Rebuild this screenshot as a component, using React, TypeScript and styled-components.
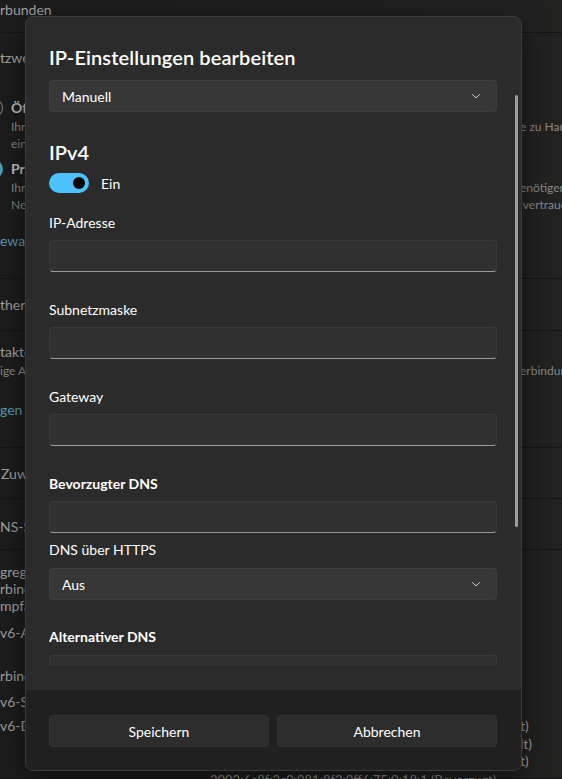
import styled, { createGlobalStyle } from "styled-components";

const GlobalStyle = createGlobalStyle`
  html, body {
    margin: 0;
    padding: 0;
    background: #1c1c1c;
  }
  body {
    font-family: "Lato", "Noto Sans", sans-serif;
    -webkit-font-smoothing: antialiased;
  }
`;

type BgLine = {
  left?: string;
  right?: string;
  kind?: "head" | "title" | "desc" | "link" | "text";
  indent?: number;
  mt?: number;
  radio?: "on" | "off";
};

const sections: { height: number; pt: number; lines: BgLine[] }[] = [
  { height: 33, pt: 0, lines: [{ left: "rbunden", kind: "text" }] },
  {
    height: 246,
    pt: 15,
    lines: [
      { left: "tzwerkprofiltyp", kind: "head" },
      { left: "Öffentliches Netzwerk (empfohlen)", kind: "title", indent: 11, mt: 30, radio: "off" },
      { left: "Ihr Gerät ist im Netzwerk nicht auffindbar.", right: "e zu Hause", kind: "desc", indent: 11 },
      { left: "ein Netzwerk verwenden", kind: "desc", indent: 11 },
      { left: "Privates Netzwerk", kind: "title", indent: 11, mt: 7, radio: "on" },
      { left: "Ihr Gerät ist im Netzwerk auffindbar.", right: "enötigen", kind: "desc", indent: 11 },
      { left: "Netzwerk vertrauen", right: " vertrauen", kind: "desc", indent: 11 },
      { left: "ewall- und Sicherheitseinstellungen konfigurieren", kind: "link", mt: 18 },
    ],
  },
  { height: 52, pt: 16, lines: [{ left: "thernet", kind: "text" }] },
  {
    height: 117,
    pt: 11,
    lines: [
      { left: "taktete Verbindung", kind: "text" },
      { left: "ige Apps funktionieren möglicherweise anders", right: "erbindung", kind: "desc" },
      { left: "gen Sie ein Datenlimit fest", kind: "link", mt: 21 },
    ],
  },
  { height: 51, pt: 16, lines: [{ left: "Zuweisung", kind: "text", indent: 1 }] },
  { height: 51, pt: 18, lines: [{ left: "NS-Serverzuweisung", kind: "text", indent: -1 }] },
  {
    height: 229,
    pt: 12,
    lines: [
      { left: "gregierte", kind: "text" },
      { left: "rbindungsgeschwindigkeit", kind: "text", mt: -3 },
      { left: "mpfangen/Übertragen)", kind: "text", mt: -3 },
      { left: "v6-Adresse", kind: "text", indent: -6, mt: 7 },
      { left: "rbindungslokale", kind: "text", mt: 23 },
      { left: "v6-Standardgateway", kind: "text", indent: -6, mt: 6 },
      { left: "v6-DNS-Server", right: "t)", kind: "text", indent: -6, mt: 4 },
      { right: "lt)", kind: "text", mt: -2 },
      { right: "t)", kind: "text", mt: -3 },
    ],
  },
];

export default function App() {
  return (
    <>
      <GlobalStyle />
      <Page>
        {sections.map((s, i) => (
          <Section key={i} $height={s.height} $pt={s.pt}>
            {s.lines.map((l, j) => (
              <Row key={j} $mt={l.mt ?? 0}>
                <LeftText $kind={l.kind ?? "text"} $indent={l.indent ?? 0}>
                  {l.radio && <Radio $on={l.radio === "on"} />}
                  {l.left}
                </LeftText>
                <RightText $kind={l.kind ?? "text"}>{l.right}</RightText>
              </Row>
            ))}
          </Section>
        ))}
        <TailValue>2002:6c8f:2c0:981:8f2:9ff6:75:0:18:1 (Bevorzugt)</TailValue>

        <Dialog>
          <Body>
            <Title>IP-Einstellungen bearbeiten</Title>
            <Scroll>
              <Select $mt={9}>
                Manuell
                <Chevron />
              </Select>
              <Heading>IPv4</Heading>
              <ToggleRow>
                <Toggle>
                  <Knob />
                </Toggle>
                Ein
              </ToggleRow>
              <Label $mt={20}>IP-Adresse</Label>
              <Input />
              <Label>Subnetzmaske</Label>
              <Input />
              <Label>Gateway</Label>
              <Input />
              <Label $bold>Bevorzugter DNS</Label>
              <Input />
              <Label $mt={7}>DNS über HTTPS</Label>
              <Select $mt={8}>
                Aus
                <Chevron />
              </Select>
              <Label $bold $mt={27}>
                Alternativer DNS
              </Label>
              <Input $mt={8} />
              <Label>Alternative DNS-Verschlüsselung</Label>
            </Scroll>
            <Thumb />
          </Body>
          <Footer>
            <Button>Speichern</Button>
            <Button>Abbrechen</Button>
          </Footer>
        </Dialog>
      </Page>
    </>
  );
}

const Chevron = () => (
  <svg width="12" height="12" viewBox="0 0 12 12" fill="none">
    <path d="M2.5 4.5 L6 8 L9.5 4.5" stroke="#cfcfcf" strokeWidth="1" strokeLinecap="round" strokeLinejoin="round" />
  </svg>
);

const Page = styled.div`
  position: relative;
  width: 562px;
  height: 779px;
  overflow: hidden;
  background: linear-gradient(90deg, #1b1b1b 0%, #1e1e1e 70%, #20211f 100%);
`;

const Section = styled.div<{ $height: number; $pt: number }>`
  box-sizing: border-box;
  height: ${({ $height }) => $height}px;
  padding-top: ${({ $pt }) => $pt}px;
  border-bottom: 1px solid #151515;
  background: rgba(255, 255, 255, 0.012);

  &:last-of-type {
    border-bottom: none;
    background: transparent;
  }
`;

const Row = styled.div<{ $mt: number }>`
  display: grid;
  grid-template-columns: 1fr 42px;
  margin-top: ${({ $mt }) => $mt}px;
`;

const kindColor = {
  head: "#a9a9a9",
  title: "#c4c4c4",
  desc: "#8a8a8a",
  link: "#5c9db2",
  text: "#a3a3a3",
};

const LeftText = styled.div<{ $kind: keyof typeof kindColor; $indent: number }>`
  position: relative;
  padding-left: ${({ $indent }) => $indent}px;
  white-space: nowrap;
  overflow: hidden;
  font-size: ${({ $kind }) => ($kind === "desc" ? 12 : 14)}px;
  line-height: ${({ $kind }) => ($kind === "desc" ? 17 : 20)}px;
  font-weight: ${({ $kind }) => ($kind === "title" ? 700 : 400)};
  color: ${({ $kind }) => kindColor[$kind]};
`;

const RightText = styled(LeftText).attrs({ $indent: 0 })`
  white-space: pre;
`;

const Radio = styled.span<{ $on: boolean }>`
  position: absolute;
  left: -17px;
  top: 0;
  width: 20px;
  height: 20px;
  box-sizing: border-box;
  border-radius: 50%;
  border: ${({ $on }) => ($on ? "5px solid #4e9fc0" : "1px solid #8a8a8a")};
  background: ${({ $on }) => ($on ? "#111" : "transparent")};
`;

const TailValue = styled.div`
  position: absolute;
  left: 210px;
  top: 771px;
  font-size: 13px;
  line-height: 18px;
  color: #8a8a8a;
  white-space: nowrap;
`;

const Dialog = styled.div`
  position: absolute;
  left: 25px;
  top: 16px;
  width: 497px;
  height: 755px;
  box-sizing: border-box;
  display: flex;
  flex-direction: column;
  border: 1px solid #3b3b3b;
  border-radius: 8px;
  overflow: hidden;
  background: #2b2b2b;
  box-shadow: 0 8px 32px rgba(0, 0, 0, 0.55);
  color: #ffffff;
`;

const Body = styled.div`
  position: relative;
  flex: 1;
  display: flex;
  flex-direction: column;
  min-height: 0;
  padding: 0 24px 25px 23px;
`;

const Title = styled.div`
  margin-top: 26px;
  font-size: 20px;
  line-height: 28px;
  font-weight: 600;
  letter-spacing: 0.1px;
`;

const Scroll = styled.div`
  flex: 1;
  min-height: 0;
  overflow: hidden;
  display: flex;
  flex-direction: column;
`;

const Select = styled.div<{ $mt: number }>`
  flex-shrink: 0;
  box-sizing: border-box;
  height: 32px;
  margin-top: ${({ $mt }) => $mt}px;
  padding: 0 14px 0 12px;
  display: flex;
  align-items: center;
  justify-content: space-between;
  background: #373737;
  border: 1px solid #3d3d3d;
  border-top-color: #414141;
  border-radius: 4px;
  font-size: 14px;
`;

const Heading = styled.div`
  margin-top: 26px;
  font-size: 20px;
  line-height: 28px;
  font-weight: 600;
`;

const ToggleRow = styled.div`
  margin-top: 7px;
  display: flex;
  align-items: center;
  gap: 12px;
  height: 20px;
  font-size: 14px;
`;

const Toggle = styled.div`
  position: relative;
  width: 40px;
  height: 20px;
  border-radius: 10px;
  background: #4cc2ff;
`;

const Knob = styled.span`
  position: absolute;
  right: 4px;
  top: 4px;
  width: 12px;
  height: 12px;
  border-radius: 50%;
  background: #000;
`;

const Label = styled.div<{ $mt?: number; $bold?: boolean }>`
  flex-shrink: 0;
  margin-top: ${({ $mt }) => $mt ?? 28}px;
  font-size: 14px;
  line-height: 20px;
  font-weight: ${({ $bold }) => ($bold ? 700 : 400)};
`;

const Input = styled.div<{ $mt?: number }>`
  flex-shrink: 0;
  box-sizing: border-box;
  height: 32px;
  margin-top: ${({ $mt }) => $mt ?? 7}px;
  background: #313131;
  border: 1px solid #393939;
  border-bottom: 1px solid #9a9a9a;
  border-radius: 4px;
`;

const Thumb = styled.span`
  position: absolute;
  right: 3px;
  top: 78px;
  width: 3px;
  height: 432px;
  border-radius: 2px;
  background: #9c9c9c;
`;

const Footer = styled.div`
  display: flex;
  gap: 8px;
  padding: 24px 24px 23px 23px;
  background: #202020;
  border-top: 1px solid #1d1d1d;
`;

const Button = styled.button`
  flex: 1;
  height: 32px;
  border: 1px solid #333333;
  border-radius: 4px;
  background: #2d2d2d;
  color: #ffffff;
  font-family: inherit;
  font-size: 14px;
`;
